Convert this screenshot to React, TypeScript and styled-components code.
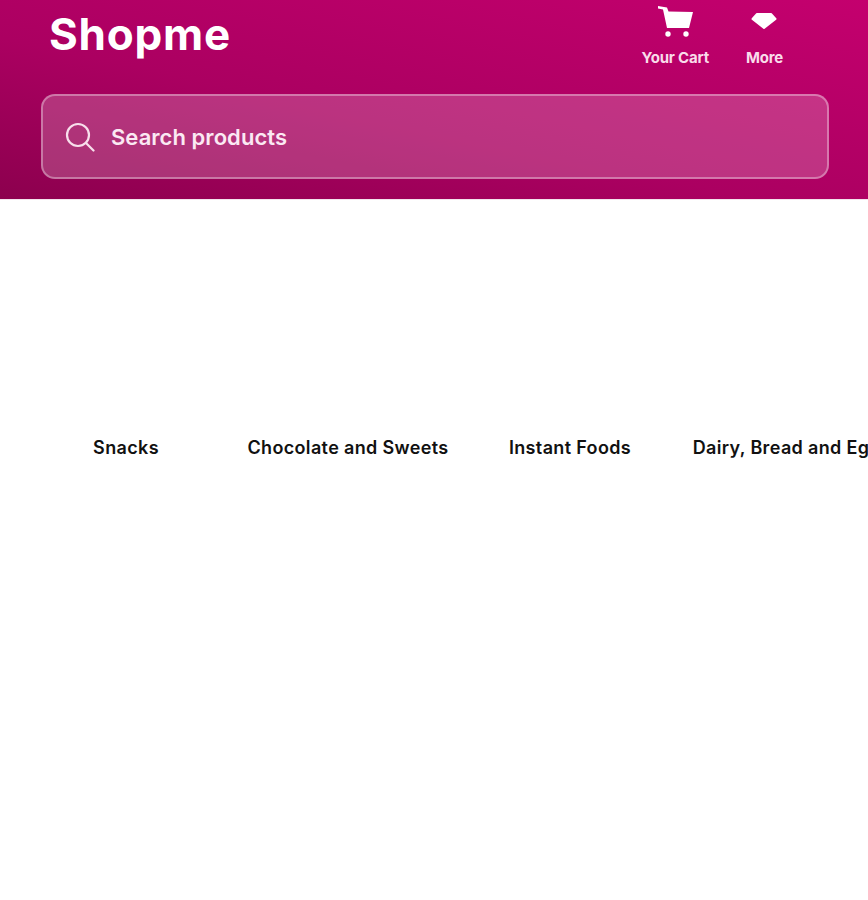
import React from 'react';
import styled, { createGlobalStyle } from 'styled-components';

const GlobalStyle = createGlobalStyle`
  html, body {
    margin: 0;
    padding: 0;
    background: #fff;
  }
  body {
    font-family: 'Inter', 'Open Sans', sans-serif;
    overflow: hidden;
  }
`;

const Page = styled.div`
  width: 868px;
  height: 900px;
  overflow: hidden;
  background: #fff;
`;

const Header = styled.header`
  box-sizing: border-box;
  height: 199px;
  padding: 0 39px 20px 41px;
  display: flex;
  flex-direction: column;
  background: linear-gradient(192deg, #c4006e 0%, #ab0061 58%, #8c004e 100%);
  box-shadow: 0 1px 0 #f3e3ec;
`;

const TopRow = styled.div`
  height: 94px;
  flex: none;
  display: flex;
  align-items: flex-start;
  justify-content: space-between;
`;

const Logo = styled.h1`
  margin: 9px 0 0 8px;
  font-size: 44px;
  line-height: 50px;
  font-weight: 700;
  letter-spacing: 0.8px;
  color: #fff;
`;

const Actions = styled.nav`
  display: flex;
  gap: 37px;
  margin-right: 46px;
  padding-top: 4px;
`;

const Action = styled.div`
  display: flex;
  flex-direction: column;
  align-items: center;
  color: #f9dcea;
  font-size: 15px;
  line-height: 18px;
  font-weight: 700;
  letter-spacing: -0.2px;
  white-space: nowrap;
`;

const ActionIcon = styled.svg`
  width: 36px;
  height: 36px;
  margin-bottom: 9px;
  display: block;
  fill: #fff;
`;

const SearchBar = styled.div`
  box-sizing: border-box;
  height: 85px;
  flex: none;
  display: flex;
  align-items: center;
  gap: 16px;
  padding-left: 22px;
  border: 2px solid rgba(255, 255, 255, 0.34);
  border-radius: 14px;
  background: rgba(255, 255, 255, 0.2);
`;

const SearchIcon = styled.svg`
  width: 30px;
  height: 30px;
  flex: none;
  fill: none;
  stroke: #f8dfec;
  stroke-width: 2.2;
  stroke-linecap: round;
`;

const SearchText = styled.span`
  font-size: 22px;
  font-weight: 600;
  letter-spacing: 0.05px;
  color: #fbe9f3;
`;

const Categories = styled.section`
  display: flex;
  padding-left: 15px;
`;

const Category = styled.div`
  flex: 0 0 222px;
  box-sizing: border-box;
  height: 270px;
  padding-top: 237px;
  text-align: center;
  font-size: 18px;
  line-height: 24px;
  font-weight: 600;
  letter-spacing: 0.35px;
  color: #111;
  white-space: nowrap;
`;

const categories = ['Snacks', 'Chocolate and Sweets', 'Instant Foods', 'Dairy, Bread and Eggs'];

const App: React.FC = () => (
  <Page>
    <GlobalStyle />
    <Header>
      <TopRow>
        <Logo>Shopme</Logo>
        <Actions>
          <Action>
            <ActionIcon viewBox="0 0 36 36">
              <path d="M1 2l9 1.500 1.500 4L36 8l-4 16H10L6 5.500 1 4.500z" />
              <circle cx="11" cy="30" r="2.700" />
              <circle cx="29" cy="30" r="2.700" />
            </ActionIcon>
            Your Cart
          </Action>
          <Action>
            <ActionIcon viewBox="0 0 36 36">
              <path
                d="M11 10h14l4.500 5L18 24 6.500 15z"
                strokeWidth="2"
                stroke="#fff"
                strokeLinejoin="round"
              />
            </ActionIcon>
            More
          </Action>
        </Actions>
      </TopRow>
      <SearchBar>
        <SearchIcon viewBox="0 0 30 30">
          <circle cx="13" cy="13" r="11" />
          <path d="M21 21L28.500 28.500" />
        </SearchIcon>
        <SearchText>Search products</SearchText>
      </SearchBar>
    </Header>
    <Categories>
      {categories.map((name) => (
        <Category key={name}>{name}</Category>
      ))}
    </Categories>
  </Page>
);

export default App;
